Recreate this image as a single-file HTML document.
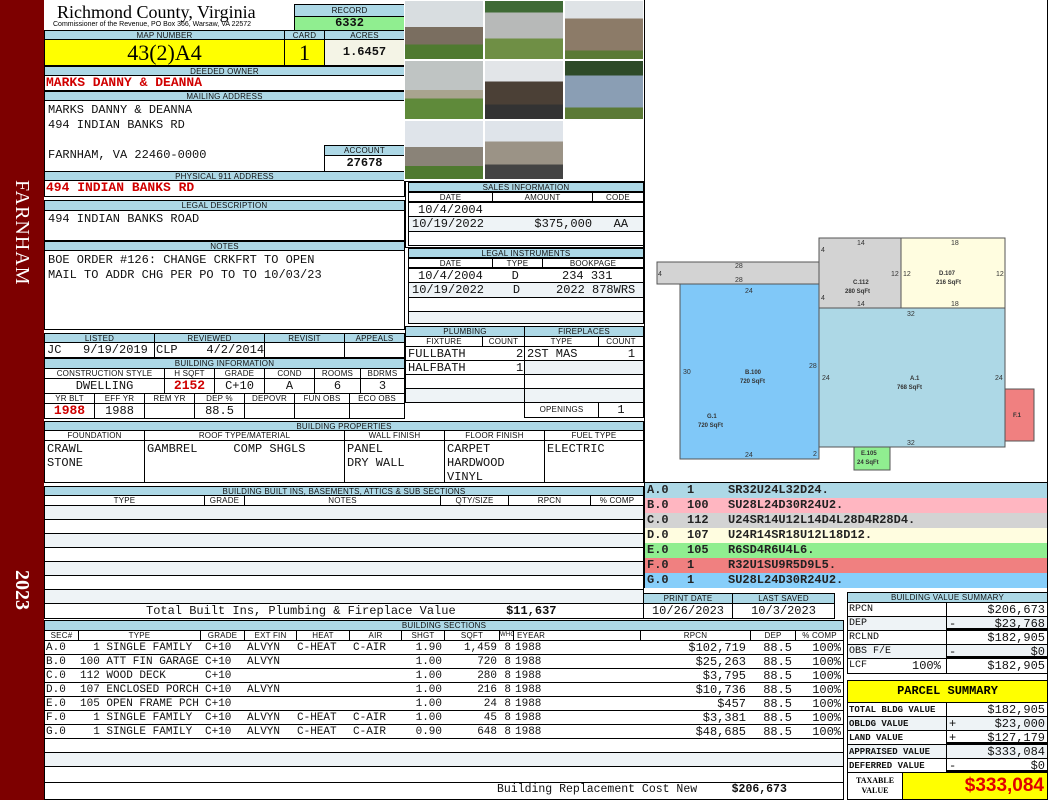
<!DOCTYPE html>
<html><head><meta charset="utf-8"><style>
*{margin:0;padding:0;box-sizing:border-box}
body{width:1050px;height:800px;position:relative;background:#fff;overflow:hidden;font-family:"Liberation Mono",monospace}
div,span{position:absolute}
.h{background:#add8e6;border:1px solid #000;font:8px/9px "Liberation Sans",sans-serif;text-align:center;color:#111;letter-spacing:.2px;white-space:nowrap;overflow:hidden}
.b{border:1px solid #000;background:#fff;white-space:pre;overflow:hidden}
.m{font:12px/14px "Liberation Mono",monospace;white-space:pre;color:#111}
.s{font:11px/14px "Liberation Mono",monospace;white-space:pre;color:#111}
.c{font:11px/14px "Liberation Mono",monospace;white-space:pre;color:#111;top:641px}
.r{text-align:right}
.red{color:#d00000;font-weight:bold}
.st{background:#eef3f6}
.lg{font:bold 12px/15px "Liberation Mono",monospace;color:#222;white-space:pre}
</style></head><body>
<!-- left bar -->
<div style="left:0;top:0;width:44px;height:800px;background:#7d0000"></div>
<div style="left:8px;top:180px;width:28px;height:120px;writing-mode:vertical-rl;color:#fff;font:20px/28px 'Liberation Serif',serif;letter-spacing:1px">FARNHAM</div>
<div style="left:8px;top:570px;width:28px;height:60px;writing-mode:vertical-rl;color:#fff;font:bold 20px/28px 'Liberation Serif',serif">2023</div>

<!-- header -->
<div style="left:57px;top:2px;font:18px/20px 'Liberation Serif',serif;color:#000;white-space:nowrap">Richmond County, Virginia</div>
<div style="left:53px;top:20px;font:7px/9px 'Liberation Sans',sans-serif;white-space:nowrap">Commissioner of the Revenue, PO Box 366, Warsaw, VA 22572</div>
<div class="h" style="left:294px;top:4px;width:111px;height:13px;line-height:11px">RECORD</div>
<div class="b m" style="left:294px;top:16px;width:111px;height:15px;background:#90ee90;text-align:center;font-weight:bold;line-height:13px">6332</div>
<div class="h" style="left:44px;top:30px;width:241px;height:10px">MAP NUMBER</div>
<div class="h" style="left:284px;top:30px;width:41px;height:10px">CARD</div>
<div class="h" style="left:324px;top:30px;width:81px;height:10px">ACRES</div>
<div class="b" style="left:44px;top:39px;width:241px;height:27px;background:#ffff00;text-align:center;font:22px/25px 'Liberation Serif',serif">43(2)A4</div>
<div class="b" style="left:284px;top:39px;width:41px;height:27px;background:#ffff00;text-align:center;font:22px/25px 'Liberation Serif',serif">1</div>
<div class="b m" style="left:324px;top:39px;width:81px;height:27px;background:#f4f4e6;text-align:center;font-weight:bold;line-height:25px">1.6457</div>
<div class="h" style="left:44px;top:66px;width:361px;height:10px">DEEDED OWNER</div>
<div class="b m red" style="left:44px;top:75px;width:361px;height:16px;font-size:13px;padding-left:1px">MARKS DANNY &amp; DEANNA</div>
<div class="h" style="left:44px;top:91px;width:361px;height:10px">MAILING ADDRESS</div>
<div class="b m" style="left:44px;top:100px;width:361px;height:72px;padding:2px 0 0 3px;line-height:15px">MARKS DANNY &amp; DEANNA
494 INDIAN BANKS RD

FARNHAM, VA 22460-0000</div>
<div class="h" style="left:324px;top:145px;width:81px;height:11px">ACCOUNT</div>
<div class="b m" style="left:324px;top:155px;width:81px;height:17px;text-align:center;font-weight:bold">27678</div>
<div class="h" style="left:44px;top:171px;width:361px;height:10px">PHYSICAL 911 ADDRESS</div>
<div class="b m red" style="left:44px;top:180px;width:361px;height:17px;font-size:13px;padding-left:1px">494 INDIAN BANKS RD</div>
<div class="h" style="left:44px;top:200px;width:361px;height:11px">LEGAL DESCRIPTION</div>
<div class="b m" style="left:44px;top:210px;width:361px;height:31px;padding:1px 0 0 3px">494 INDIAN BANKS ROAD</div>
<div class="h" style="left:44px;top:241px;width:361px;height:10px">NOTES</div>
<div class="b m" style="left:44px;top:250px;width:361px;height:80px;padding:2px 0 0 3px;line-height:15px">BOE ORDER #126: CHANGE CRKFRT TO OPEN
MAIL TO ADDR CHG PER PO TO TO 10/03/23</div>

<!-- listed -->
<div class="h" style="left:44px;top:333px;width:111px;height:10px">LISTED</div>
<div class="h" style="left:154px;top:333px;width:111px;height:10px">REVIEWED</div>
<div class="h" style="left:264px;top:333px;width:81px;height:10px">REVISIT</div>
<div class="h" style="left:344px;top:333px;width:61px;height:10px">APPEALS</div>
<div class="b m" style="left:44px;top:342px;width:111px;height:16px;padding-left:2px">JC   9/19/2019</div>
<div class="b m" style="left:154px;top:342px;width:111px;height:16px;padding-left:1px">CLP    4/2/2014</div>
<div class="b" style="left:264px;top:342px;width:81px;height:16px"></div>
<div class="b" style="left:344px;top:342px;width:61px;height:16px"></div>

<div class="h" style="left:44px;top:358px;width:361px;height:11px">BUILDING INFORMATION</div>
<div class="h" style="left:44px;top:368px;width:121px;height:11px;background:#fff">CONSTRUCTION STYLE</div>
<div class="h" style="left:164px;top:368px;width:51px;height:11px;background:#fff">H SQFT</div>
<div class="h" style="left:214px;top:368px;width:51px;height:11px;background:#fff">GRADE</div>
<div class="h" style="left:264px;top:368px;width:51px;height:11px;background:#fff">COND</div>
<div class="h" style="left:314px;top:368px;width:47px;height:11px;background:#fff">ROOMS</div>
<div class="h" style="left:360px;top:368px;width:45px;height:11px;background:#fff">BDRMS</div>
<div class="b m" style="left:44px;top:378px;width:121px;height:16px;text-align:center">DWELLING</div>
<div class="b m red" style="left:164px;top:378px;width:51px;height:16px;text-align:center;font-size:13px">2152</div>
<div class="b m" style="left:214px;top:378px;width:51px;height:16px;text-align:center">C+10</div>
<div class="b m" style="left:264px;top:378px;width:51px;height:16px;text-align:center">A</div>
<div class="b m" style="left:314px;top:378px;width:47px;height:16px;text-align:center">6</div>
<div class="b m" style="left:360px;top:378px;width:45px;height:16px;text-align:center">3</div>
<div class="h" style="left:44px;top:393px;width:51px;height:11px;background:#fff">YR BLT</div>
<div class="h" style="left:94px;top:393px;width:51px;height:11px;background:#fff">EFF YR</div>
<div class="h" style="left:144px;top:393px;width:51px;height:11px;background:#fff">REM YR</div>
<div class="h" style="left:194px;top:393px;width:51px;height:11px;background:#fff">DEP %</div>
<div class="h" style="left:244px;top:393px;width:51px;height:11px;background:#fff">DEPOVR</div>
<div class="h" style="left:294px;top:393px;width:56px;height:11px;background:#fff">FUN OBS</div>
<div class="h" style="left:349px;top:393px;width:56px;height:11px;background:#fff">ECO OBS</div>
<div class="b m red" style="left:44px;top:403px;width:51px;height:16px;text-align:center;font-size:13px">1988</div>
<div class="b m" style="left:94px;top:403px;width:51px;height:16px;text-align:center">1988</div>
<div class="b" style="left:144px;top:403px;width:51px;height:16px"></div>
<div class="b m" style="left:194px;top:403px;width:51px;height:16px;text-align:center">88.5</div>
<div class="b" style="left:244px;top:403px;width:51px;height:16px"></div>
<div class="b" style="left:294px;top:403px;width:56px;height:16px"></div>
<div class="b" style="left:349px;top:403px;width:56px;height:16px"></div>

<!-- photos -->
<div style="left:404px;top:0;width:241px;height:181px;background:#fff;border-right:1px solid #000"></div>
<div style="left:405px;top:1px;width:78px;height:58px;background:linear-gradient(#d8dde0 0 45%,#7a6e60 45% 75%,#4f7a30 75%)"></div>
<div style="left:485px;top:1px;width:78px;height:58px;background:linear-gradient(#3f6a35 0 20%,#b7b9b8 20% 65%,#6f8f45 65%)"></div>
<div style="left:565px;top:1px;width:78px;height:58px;background:linear-gradient(#dfe3e6 0 30%,#8c7b68 30% 85%,#5b7a35 85%)"></div>
<div style="left:405px;top:61px;width:78px;height:58px;background:linear-gradient(#bfc4c3 0 50%,#a9a48f 50% 65%,#5f8a3a 65%)"></div>
<div style="left:485px;top:61px;width:78px;height:58px;background:linear-gradient(#e2e5e8 0 35%,#4b4036 35% 75%,#333 75%)"></div>
<div style="left:565px;top:61px;width:78px;height:58px;background:linear-gradient(#2e4a28 0 25%,#8a9eb4 25% 80%,#5b7a35 80%)"></div>
<div style="left:405px;top:121px;width:78px;height:58px;background:linear-gradient(#dfe4ea 0 45%,#8a8378 45% 78%,#4f7a30 78%)"></div>
<div style="left:485px;top:121px;width:78px;height:58px;background:linear-gradient(#dfe4ea 0 35%,#9b9386 35% 75%,#444 75%)"></div>

<!-- sales -->
<div class="b" style="left:405px;top:181px;width:239px;height:67px"></div>
<div class="h" style="left:408px;top:182px;width:236px;height:10px">SALES INFORMATION</div>
<div class="h" style="left:408px;top:192px;width:85px;height:10px;background:#fff">DATE</div>
<div class="h" style="left:492px;top:192px;width:101px;height:10px;background:#fff">AMOUNT</div>
<div class="h" style="left:592px;top:192px;width:52px;height:10px;background:#fff">CODE</div>
<div class="b m" style="left:408px;top:202px;width:236px;height:15px;padding-left:9px">10/4/2004</div>
<div class="b m st" style="left:408px;top:216px;width:236px;height:16px;padding-left:3px">10/19/2022       $375,000   AA</div>
<div class="b" style="left:408px;top:231px;width:236px;height:15px"></div>
<div class="h" style="left:408px;top:248px;width:236px;height:10px">LEGAL INSTRUMENTS</div>
<div class="h" style="left:408px;top:258px;width:85px;height:10px;background:#fff">DATE</div>
<div class="h" style="left:492px;top:258px;width:51px;height:10px;background:#fff">TYPE</div>
<div class="h" style="left:542px;top:258px;width:102px;height:10px;background:#fff">BOOKPAGE</div>
<div class="b m" style="left:408px;top:268px;width:236px;height:15px;padding-left:9px">10/4/2004    D      234 331</div>
<div class="b m st" style="left:408px;top:282px;width:236px;height:16px;padding-left:3px">10/19/2022    D     2022 878WRS</div>
<div class="b" style="left:408px;top:297px;width:236px;height:15px"></div>
<div class="b st" style="left:408px;top:311px;width:236px;height:13px"></div>
<div class="h" style="left:405px;top:326px;width:120px;height:11px">PLUMBING</div>
<div class="h" style="left:524px;top:326px;width:120px;height:11px">FIREPLACES</div>
<div class="h" style="left:405px;top:336px;width:78px;height:11px;background:#fff">FIXTURE</div>
<div class="h" style="left:482px;top:336px;width:43px;height:11px;background:#fff">COUNT</div>
<div class="h" style="left:524px;top:336px;width:75px;height:11px;background:#fff">TYPE</div>
<div class="h" style="left:598px;top:336px;width:46px;height:11px;background:#fff">COUNT</div>
<div class="b m" style="left:405px;top:346px;width:120px;height:15px;padding-left:2px">FULLBATH       2</div>
<div class="b m" style="left:405px;top:360px;width:120px;height:15px;padding-left:2px">HALFBATH       1</div>
<div class="b" style="left:405px;top:374px;width:120px;height:15px"></div>
<div class="b st" style="left:405px;top:388px;width:120px;height:15px"></div>
<div class="b m" style="left:524px;top:346px;width:120px;height:15px;padding-left:2px">2ST MAS       1</div>
<div class="b st" style="left:524px;top:360px;width:120px;height:15px"></div>
<div class="b" style="left:524px;top:374px;width:120px;height:15px"></div>
<div class="b st" style="left:524px;top:388px;width:120px;height:15px"></div>
<div class="h" style="left:524px;top:402px;width:75px;height:16px;background:#fff;line-height:14px">OPENINGS</div>
<div class="b m" style="left:598px;top:402px;width:46px;height:16px;text-align:center">1</div>

<!-- building properties -->
<div class="h" style="left:44px;top:421px;width:600px;height:10px">BUILDING PROPERTIES</div>
<div class="h" style="left:44px;top:430px;width:101px;height:11px;background:#fff">FOUNDATION</div>
<div class="h" style="left:144px;top:430px;width:201px;height:11px;background:#fff">ROOF TYPE/MATERIAL</div>
<div class="h" style="left:344px;top:430px;width:101px;height:11px;background:#fff">WALL FINISH</div>
<div class="h" style="left:444px;top:430px;width:101px;height:11px;background:#fff">FLOOR FINISH</div>
<div class="h" style="left:544px;top:430px;width:100px;height:11px;background:#fff">FUEL TYPE</div>
<div class="b m" style="left:44px;top:440px;width:101px;height:43px;padding:1px 0 0 2px">CRAWL
STONE</div>
<div class="b m" style="left:144px;top:440px;width:201px;height:43px;padding:1px 0 0 2px">GAMBREL     COMP SHGLS</div>
<div class="b m" style="left:344px;top:440px;width:101px;height:43px;padding:1px 0 0 2px">PANEL
DRY WALL</div>
<div class="b m" style="left:444px;top:440px;width:101px;height:43px;padding:1px 0 0 2px">CARPET
HARDWOOD
VINYL</div>
<div class="b m" style="left:544px;top:440px;width:100px;height:43px;padding:1px 0 0 2px">ELECTRIC</div>

<!-- built ins -->
<div class="h" style="left:44px;top:486px;width:600px;height:10px">BUILDING BUILT INS, BASEMENTS, ATTICS &amp; SUB SECTIONS</div>
<div class="h" style="left:44px;top:495px;width:161px;height:11px;background:#fff">TYPE</div>
<div class="h" style="left:204px;top:495px;width:41px;height:11px;background:#fff">GRADE</div>
<div class="h" style="left:244px;top:495px;width:197px;height:11px;background:#fff">NOTES</div>
<div class="h" style="left:440px;top:495px;width:69px;height:11px;background:#fff">QTY/SIZE</div>
<div class="h" style="left:508px;top:495px;width:83px;height:11px;background:#fff">RPCN</div>
<div class="h" style="left:590px;top:495px;width:54px;height:11px;background:#fff">% COMP</div>
<div class="b st" style="left:44px;top:505px;width:600px;height:15px"></div>
<div class="b" style="left:44px;top:519px;width:600px;height:15px"></div>
<div class="b st" style="left:44px;top:533px;width:600px;height:15px"></div>
<div class="b" style="left:44px;top:547px;width:600px;height:15px"></div>
<div class="b st" style="left:44px;top:561px;width:600px;height:15px"></div>
<div class="b" style="left:44px;top:575px;width:600px;height:15px"></div>
<div class="b st" style="left:44px;top:589px;width:600px;height:15px"></div>
<div class="b m" style="left:44px;top:603px;width:600px;height:16px;padding-left:101px">Total Built Ins, Plumbing &amp; Fireplace Value       <b>$11,637</b></div>

<!-- print date -->
<div class="h" style="left:643px;top:593px;width:90px;height:11px">PRINT DATE</div>
<div class="h" style="left:732px;top:593px;width:103px;height:11px">LAST SAVED</div>
<div class="b m" style="left:643px;top:603px;width:90px;height:16px;text-align:center">10/26/2023</div>
<div class="b m" style="left:732px;top:603px;width:103px;height:16px;text-align:center">10/3/2023</div>

<!-- building sections -->
<div class="h" style="left:44px;top:620px;width:800px;height:11px">BUILDING SECTIONS</div>
<div class="h" style="left:44px;top:630px;width:35px;height:11px;background:#fff">SEC#</div>
<div class="h" style="left:78px;top:630px;width:123px;height:11px;background:#fff">TYPE</div>
<div class="h" style="left:200px;top:630px;width:45px;height:11px;background:#fff">GRADE</div>
<div class="h" style="left:244px;top:630px;width:53px;height:11px;background:#fff">EXT FIN</div>
<div class="h" style="left:296px;top:630px;width:54px;height:11px;background:#fff">HEAT</div>
<div class="h" style="left:349px;top:630px;width:53px;height:11px;background:#fff">AIR</div>
<div class="h" style="left:401px;top:630px;width:44px;height:11px;background:#fff">SHGT</div>
<div class="h" style="left:444px;top:630px;width:56px;height:11px;background:#fff">SQFT</div>
<div class="h" style="left:499px;top:630px;width:15px;height:11px;background:#fff;font-size:6px">WHGT</div>
<div class="h" style="left:513px;top:630px;width:128px;height:11px;background:#fff;text-align:left;padding-left:3px">EYEAR</div>
<div class="h" style="left:640px;top:630px;width:111px;height:11px;background:#fff">RPCN</div>
<div class="h" style="left:750px;top:630px;width:46px;height:11px;background:#fff">DEP</div>
<div class="h" style="left:795px;top:630px;width:49px;height:11px;background:#fff">% COMP</div>
<div class="b" style="left:44px;top:640px;width:800px;height:15px"></div>
<div class="b" style="left:44px;top:654px;width:800px;height:15px"></div>
<div class="b" style="left:44px;top:668px;width:800px;height:15px"></div>
<div class="b" style="left:44px;top:682px;width:800px;height:15px"></div>
<div class="b" style="left:44px;top:696px;width:800px;height:15px"></div>
<div class="b" style="left:44px;top:710px;width:800px;height:15px"></div>
<div class="b" style="left:44px;top:724px;width:800px;height:15px"></div>
<div class="b" style="left:44px;top:738px;width:800px;height:15px"></div>
<div class="b st" style="left:44px;top:752px;width:800px;height:15px"></div>
<div class="b" style="left:44px;top:766px;width:800px;height:17px"></div>
<div class="b m" style="left:44px;top:782px;width:800px;height:18px;padding-left:452px;font-size:11.5px">Building Replacement Cost New     <b>$206,673</b></div>
<div class="c" style="left:46px">A.0
B.0
C.0
D.0
E.0
F.0
G.0</div>
<div class="c" style="left:80px">  1 SINGLE FAMILY
100 ATT FIN GARAGE
112 WOOD DECK
107 ENCLOSED PORCH
105 OPEN FRAME PCH
  1 SINGLE FAMILY
  1 SINGLE FAMILY</div>
<div class="c" style="left:205px">C+10
C+10
C+10
C+10
C+10
C+10
C+10</div>
<div class="c" style="left:247px">ALVYN
ALVYN

ALVYN

ALVYN
ALVYN</div>
<div class="c" style="left:297px">C-HEAT




C-HEAT
C-HEAT</div>
<div class="c" style="left:353px">C-AIR




C-AIR
C-AIR</div>
<div class="c r" style="left:400px;width:42px">1.90
1.00
1.00
1.00
1.00
1.00
0.90</div>
<div class="c r" style="left:450px;width:47px">1,459
720
280
216
24
45
648</div>
<div class="c r" style="left:500px;width:11px">8
8
8
8
8
8
8</div>
<div class="c" style="left:515px">1988
1988
1988
1988
1988
1988
1988</div>
<div class="m r" style="left:640px;top:641px;width:106px;line-height:14px">$102,719
$25,263
$3,795
$10,736
$457
$3,381
$48,685</div>
<div class="m r" style="left:750px;top:641px;width:42px;line-height:14px">88.5
88.5
88.5
88.5
88.5
88.5
88.5</div>
<div class="m r" style="left:795px;top:641px;width:46px;line-height:14px">100%
100%
100%
100%
100%
100%
100%</div>

<!-- sketch -->
<div style="left:644px;top:0;width:1px;height:482px;background:#000"></div>
<div style="left:1047px;top:0;width:1px;height:800px;background:#000"></div>
<svg style="position:absolute;left:645px;top:230px" width="403" height="250" font-family="Liberation Sans,sans-serif" font-size="7" fill="#333">
<g stroke="#555" stroke-width="1">
<rect x="12" y="32" width="162" height="22" fill="#d3d3d3"/>
<rect x="174" y="8" width="82" height="70" fill="#d3d3d3"/>
<rect x="256" y="8" width="104" height="70" fill="#fffde0"/>
<rect x="35" y="54" width="139" height="175" fill="#80c8f8"/>
<rect x="174" y="78" width="186" height="139" fill="#add8e6"/>
<rect x="360" y="159" width="29" height="52" fill="#f08080"/>
<rect x="209" y="217" width="36" height="23" fill="#90ee90"/>
</g>
<text x="90" y="38">28</text><text x="90" y="52">28</text><text x="13" y="46">4</text>
<text x="212" y="15">14</text><text x="212" y="76">14</text><text x="176" y="22">4</text><text x="176" y="70">4</text>
<text x="246" y="46">12</text><text x="258" y="46">12</text><text x="351" y="46">12</text>
<text x="306" y="15">18</text><text x="306" y="76">18</text>
<text x="208" y="54" font-weight="bold" font-size="6">C.112</text><text x="200" y="54" dy="9" font-weight="bold" font-size="6">280 SqFt</text>
<text x="294" y="45" font-weight="bold" font-size="6">D.107</text><text x="291" y="54" font-weight="bold" font-size="6">216 SqFt</text>
<text x="100" y="63">24</text><text x="100" y="227">24</text><text x="38" y="144">30</text><text x="164" y="138">28</text><text x="168" y="226">2</text>
<text x="100" y="144" font-weight="bold" font-size="6">B.100</text><text x="95" y="153" font-weight="bold" font-size="6">720 SqFt</text>
<text x="62" y="188" font-weight="bold" font-size="6">G.1</text><text x="53" y="197" font-weight="bold" font-size="6">720 SqFt</text>
<text x="262" y="86">32</text><text x="262" y="215">32</text><text x="177" y="150">24</text><text x="350" y="150">24</text>
<text x="265" y="150" font-weight="bold" font-size="6">A.1</text><text x="252" y="159" font-weight="bold" font-size="6">768 SqFt</text>
<text x="368" y="187" font-weight="bold" font-size="6">F.1</text>
<text x="216" y="225" font-weight="bold" font-size="6">E.105</text><text x="212" y="234" font-weight="bold" font-size="6">24 SqFt</text>
</svg>
<div style="left:644px;top:482px;width:404px;height:106px;border:1px solid #000"></div>
<div style="left:645px;top:483px;width:402px;height:15px;background:#add8e6"></div>
<div style="left:645px;top:498px;width:402px;height:15px;background:#ffb6c1"></div>
<div style="left:645px;top:513px;width:402px;height:15px;background:#d3d3d3"></div>
<div style="left:645px;top:528px;width:402px;height:15px;background:#fffde0"></div>
<div style="left:645px;top:543px;width:402px;height:15px;background:#90ee90"></div>
<div style="left:645px;top:558px;width:402px;height:15px;background:#f08080"></div>
<div style="left:645px;top:573px;width:402px;height:15px;background:#87cefa"></div>
<div class="lg" style="left:647px;top:483px">A.0
B.0
C.0
D.0
E.0
F.0
G.0</div>
<div class="lg" style="left:687px;top:483px">1
100
112
107
105
1
1</div>
<div class="lg" style="left:728px;top:483px">SR32U24L32D24.
SU28L24D30R24U2.
U24SR14U12L14D4L28D4R28D4.
U24R14SR18U12L18D12.
R6SD4R6U4L6.
R32U1SU9R5D9L5.
SU28L24D30R24U2.</div>

<!-- building value summary -->
<div class="h" style="left:847px;top:592px;width:201px;height:11px">BUILDING VALUE SUMMARY</div>
<div class="b s" style="left:847px;top:602px;width:100px;height:15px;font-size:10px;padding-left:1px">RPCN</div>
<div class="b m r" style="left:946px;top:602px;width:102px;height:15px;padding-right:2px">$206,673</div>
<div class="b s st" style="left:847px;top:616px;width:100px;height:15px;font-size:10px;padding-left:1px">DEP</div>
<div class="b m r st" style="left:946px;top:616px;width:102px;height:15px;padding-right:2px;border-bottom:3px solid #000"><span style="left:2px">-</span>$23,768</div>
<div class="b s" style="left:847px;top:630px;width:100px;height:15px;font-size:10px;padding-left:1px">RCLND</div>
<div class="b m r" style="left:946px;top:630px;width:102px;height:15px;padding-right:2px">$182,905</div>
<div class="b s st" style="left:847px;top:644px;width:100px;height:15px;font-size:10px;padding-left:1px">OBS F/E</div>
<div class="b m r st" style="left:946px;top:644px;width:102px;height:15px;padding-right:2px;border-bottom:3px solid #000"><span style="left:2px">-</span>$0</div>
<div class="b s" style="left:847px;top:658px;width:100px;height:16px;font-size:10px;padding-left:1px">LCF</div>
<div class="m" style="left:912px;top:659px">100%</div>
<div class="b m r" style="left:946px;top:658px;width:102px;height:16px;padding-right:2px">$182,905</div>

<!-- parcel summary -->
<div class="b" style="left:847px;top:680px;width:201px;height:23px;background:#ffff00;text-align:center;font:bold 12px/21px 'Liberation Mono',monospace">PARCEL SUMMARY</div>
<div class="b s" style="left:847px;top:702px;width:100px;height:15px;font-size:9px;font-weight:bold;padding-left:1px">TOTAL BLDG VALUE</div>
<div class="b m r" style="left:946px;top:702px;width:102px;height:15px;padding-right:2px">$182,905</div>
<div class="b s st" style="left:847px;top:716px;width:100px;height:15px;font-size:9px;font-weight:bold;padding-left:1px">OBLDG VALUE</div>
<div class="b m r st" style="left:946px;top:716px;width:102px;height:15px;padding-right:2px"><span style="left:2px">+</span>$23,000</div>
<div class="b s" style="left:847px;top:730px;width:100px;height:15px;font-size:9px;font-weight:bold;padding-left:1px">LAND VALUE</div>
<div class="b m r" style="left:946px;top:730px;width:102px;height:15px;padding-right:2px;border-bottom:3px solid #000"><span style="left:2px">+</span>$127,179</div>
<div class="b s st" style="left:847px;top:744px;width:100px;height:15px;font-size:9px;font-weight:bold;padding-left:1px">APPRAISED VALUE</div>
<div class="b m r st" style="left:946px;top:744px;width:102px;height:15px;padding-right:2px">$333,084</div>
<div class="b s" style="left:847px;top:758px;width:100px;height:15px;font-size:9px;font-weight:bold;padding-left:1px">DEFERRED VALUE</div>
<div class="b m r" style="left:946px;top:758px;width:102px;height:15px;padding-right:2px;border-bottom:3px solid #000"><span style="left:2px">-</span>$0</div>
<div class="b" style="left:847px;top:772px;width:56px;height:28px;text-align:center;font:bold 8px/10px 'Liberation Serif',serif;padding-top:3px">TAXABLE<br>VALUE</div>
<div class="b" style="left:902px;top:772px;width:146px;height:28px;background:#ffff00;text-align:right;padding-right:3px;color:#e00000;font:bold 19px/26px 'Liberation Sans',sans-serif">$333,084</div>
</body></html>
